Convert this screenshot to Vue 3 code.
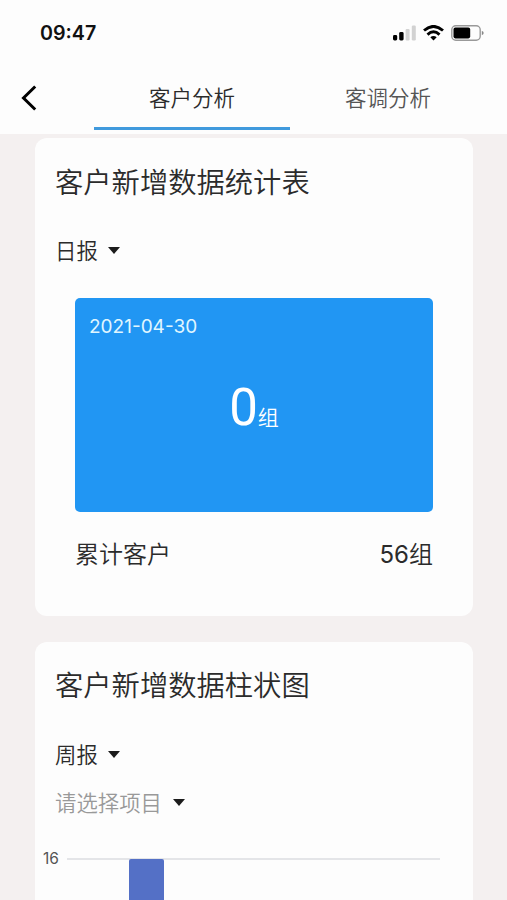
<template>
  <div class="page">
    <header class="header">
      <div class="status">
        <span class="clock">09:47</span>
        <div class="status-icons">
          <svg class="signal" width="23" height="16" viewBox="0 0 23 16">
            <rect x="0" y="10" width="4.2" height="5.5" rx="1.4" fill="#000" />
            <rect x="6.2" y="7" width="4.4" height="8.5" rx="1.4" fill="#000" />
            <rect x="12.6" y="4" width="4" height="11.5" rx="1.2" fill="#d2d2d2" />
            <rect x="18.8" y="0.5" width="4" height="15" rx="1.2" fill="#d2d2d2" />
          </svg>
          <svg class="wifi" width="21" height="16" viewBox="0 0 21 16">
            <g fill="none" stroke="#000" stroke-width="2.9">
              <path d="M1 5.5Q10.5-2.7 20 5.5" />
              <path d="M4.5 9.6Q10.5 4.1 16.5 9.6" />
            </g>
            <path d="M7.3 12.3Q10.5 9.9 13.7 12.3L10.5 15.6Z" fill="#000" />
          </svg>
          <svg class="battery" width="33" height="16" viewBox="0 0 33 16">
            <rect x="0.8" y="0.8" width="28.4" height="14.4" rx="4" fill="none" stroke="#999" stroke-width="1.4" />
            <rect x="2.5" y="2.6" width="16.7" height="10.8" rx="1.8" fill="#000" />
            <path d="M30.8 5.8Q32.7 6.5 32.7 8T30.8 10.2Z" fill="#888" />
          </svg>
        </div>
      </div>
      <nav class="nav">
        <svg class="back" width="18" height="26" viewBox="0 0 18 26">
          <path d="M15.2 1.5L3.5 13L15.2 24.5" fill="none" stroke="#000" stroke-width="3" />
        </svg>
        <div
          v-for="(tab, index) in tabs"
          :key="tab"
          class="tab"
          :class="{ active: index === current }"
          @click="current = index"
        >
          {{ tab }}
        </div>
      </nav>
    </header>

    <main class="content">
      <section class="card card-total">
        <h2 class="title">客户新增数据统计表</h2>
        <div class="select">日报<i class="arrow"></i></div>
        <div class="panel">
          <div class="date">2021-04-30</div>
          <div class="count">
            <span class="num">0</span><span class="unit">组</span>
          </div>
        </div>
        <div class="total">
          <span>累计客户</span>
          <span><span class="sum">56</span>组</span>
        </div>
      </section>

      <section class="card card-chart">
        <h2 class="title">客户新增数据柱状图</h2>
        <div class="select">周报<i class="arrow"></i></div>
        <div class="select project">请选择项目<i class="arrow"></i></div>
        <div class="chart">
          <span class="axis">16</span>
          <div class="plot">
            <div class="bar"></div>
          </div>
        </div>
      </section>
    </main>
  </div>
</template>

<script setup>
import { ref } from "vue";

const tabs = ["客户分析", "客调分析"];
const current = ref(0);
</script>

<style>
body {
  overflow: hidden;
}
</style>

<style scoped>
.page {
  height: 900px;
  overflow: hidden;
  display: flex;
  flex-direction: column;
  background: #f4f0f0;
  color: #2b2b2b;
  font-family: Inter, "Noto Sans CJK SC", sans-serif;
  font-weight: 350;
}

.header {
  flex: none;
  height: 134px;
  background: #fdfdfd;
}

.status {
  height: 66px;
  box-sizing: border-box;
  padding: 0 23px 0 40px;
  display: flex;
  align-items: center;
  justify-content: space-between;
}

.clock {
  font-size: 19.7px;
  font-weight: 600;
  line-height: 24px;
  color: #111;
}

.status-icons {
  display: flex;
  align-items: center;
}

.wifi {
  margin-left: 7px;
}

.battery {
  margin-left: 7px;
}

.nav {
  height: 64px;
  display: flex;
}

.back {
  margin: 19px 56px 0 20px;
}

.tab {
  width: 196px;
  height: 64px;
  box-sizing: border-box;
  border-bottom: 3px solid transparent;
  font-size: 21.5px;
  line-height: 64px;
  text-align: center;
  color: #555;
}

.tab.active {
  border-color: #409add;
  color: #2b2b2b;
}

.content {
  flex: 1;
  padding: 4px 34px 0 35px;
}

.card {
  box-sizing: border-box;
  background: #fdfdfd;
  border-radius: 12px;
}

.card-total {
  height: 478px;
  padding: 25px 40px 0 20px;
}

.card-chart {
  height: 420px;
  margin-top: 26px;
  padding: 24px 33px 0 8px;
}

.title {
  margin: 0;
  font-size: 28.3px;
  font-weight: 350;
  line-height: 40px;
}

.card-chart .title,
.card-chart .select {
  margin-left: 12px;
}

.select {
  display: flex;
  align-items: center;
  margin-top: 34px;
  font-size: 21.4px;
  line-height: 30px;
}

.card-total .select {
  margin-top: 33px;
}

.arrow {
  margin: -2px 0 0 10px;
  border: 6.5px solid transparent;
  border-top: 7px solid #1c1c1c;
  border-bottom: 0;
}

.project {
  margin-top: 18px;
  color: #999;
}

.project .arrow {
  margin-left: 11px;
}

.panel {
  height: 214px;
  box-sizing: border-box;
  margin: 32px 0 0 20px;
  padding: 16px 14px 0;
  border-radius: 5px;
  background: #2196f3;
  color: #fff;
}

.date {
  font-size: 19px;
  font-weight: 400;
  line-height: 26px;
  color: #e0f6ff;
}

.count {
  margin-top: 38px;
  line-height: 60px;
  text-align: center;
}

.num {
  font-family: Roboto, sans-serif;
  font-size: 51px;
  font-weight: 400;
}

.unit {
  font-size: 21px;
}

.total {
  display: flex;
  justify-content: space-between;
  margin: 26px 0 0 20px;
  font-size: 24px;
  line-height: 34px;
}

.sum {
  font-weight: 400;
}

.chart {
  display: flex;
  margin-top: 31px;
}

.axis {
  width: 24px;
  font-size: 15.5px;
  font-weight: 400;
  line-height: 20px;
  color: #555;
}

.plot {
  flex: 1;
  height: 200px;
  margin-top: 9px;
  border-top: 2px solid #e4e5e8;
}

.bar {
  width: 35px;
  height: 200px;
  margin: -1px 0 0 62px;
  border-radius: 2px 2px 0 0;
  background: #5470c6;
}
</style>
